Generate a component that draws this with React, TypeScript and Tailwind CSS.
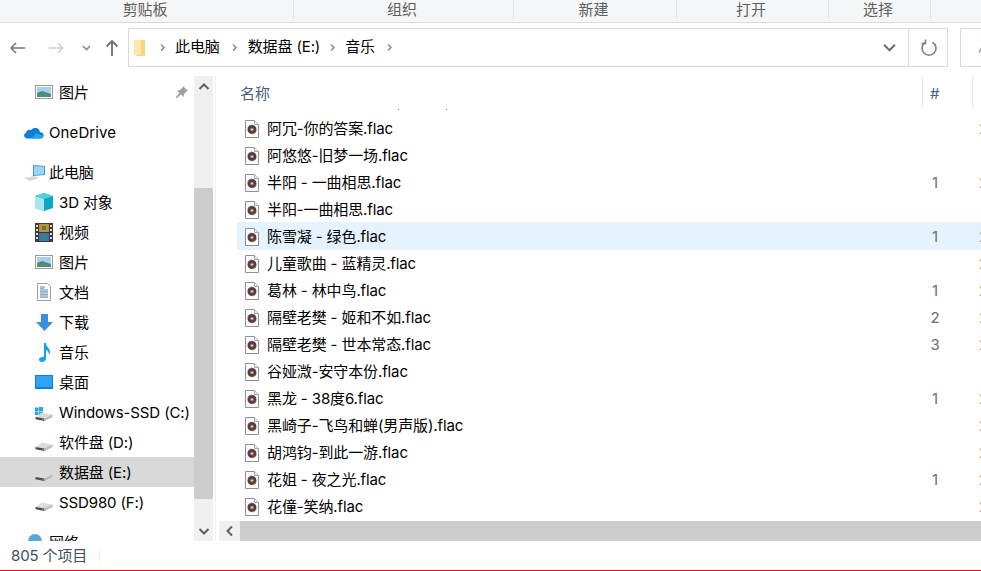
import React from "react";

const FONT = "[font-family:'Inter','Noto_Sans_CJK_SC',sans-serif] tracking-[-0.12px]";

function MusicFile() {
  return (
    <svg width="14" height="18" viewBox="0 0 14 18" className="shrink-0">
      <path d="M.5.5h9l4 4v13H.5z" fill="#fff" stroke="#8f8f8f" />
      <path d="M9.500.5v4h4" fill="#eee" stroke="#a5a5a5" />
      <circle cx="7" cy="9.500" r="4.500" fill="#4a4048" />
      <path d="M3 7.500A4.500 4.500 0 0 1 7 5" stroke="#a040a8" fill="none" />
      <path d="M11 11.500A4.500 4.500 0 0 1 7 14" stroke="#d07838" fill="none" />
      <circle cx="7" cy="9.500" r="1.800" fill="#c87a58" />
      <circle cx="7" cy="9.500" r=".8" fill="#f2e6e0" />
    </svg>
  );
}

function Drive({ win }: { win?: boolean }) {
  return (
    <svg width="18" height="18" viewBox="0 0 18 18">
      {win && (
        <g fill="#22a7e8">
          <rect x="0" y="4.500" width="3.500" height="3.500" />
          <rect x="4" y="4" width="4" height="4" />
          <rect x="0" y="8.500" width="3.500" height="3.500" />
          <rect x="4" y="8.500" width="4" height="4" />
        </g>
      )}
      <path d="M.5 14L7 9.500l10.500 2L9.500 15.500z" fill="#dcdcdc" />
      <path d="M.5 14l9 1.500V18L.5 16.300z" fill="#4a4a4a" />
      <path d="M9.500 15.500l8-4v2.500L9.500 18z" fill="#b8b8b8" />
      <rect x="7" y="15.800" width="1.500" height="1" fill="#4fbf5f" />
    </svg>
  );
}

function PictureIcon() {
  return (
    <svg width="18" height="14" viewBox="0 0 18 14">
      <rect x=".5" y=".5" width="17" height="13" fill="#fff" stroke="#9a9a9a" />
      <rect x="2" y="2" width="14" height="10" fill="#a9d0ee" />
      <path d="M2 8l5-2 9 3v3H2z" fill="#4f8a7c" />
    </svg>
  );
}

const navIcons: Record<string, React.ReactNode> = {
  cube: (
    <svg width="18" height="18" viewBox="0 0 18 18">
      <path d="M9 0l9 3v12l-9 3-9-3V3z" fill="#0fa5c4" />
      <path d="M0 3l9 3v12l-9-3z" fill="#a3e8ec" />
      <path d="M9 0l9 3-9 3-9-3z" fill="#57cfdf" />
    </svg>
  ),
  video: (
    <svg width="18" height="19" viewBox="0 0 18 19">
      <rect width="18" height="19" fill="#3a3a3a" />
      <rect x="4" y="1" width="10" height="8" fill="#c98a3a" />
      <rect x="4" y="10" width="10" height="8" fill="#3a70c8" />
      <path d="M7 3h4v4H7zM7 12h4v4H7z" fill="#3f8f3f" />
      <g fill="#ddd">
        <rect x="1" y="2" width="2" height="2" />
        <rect x="1" y="6" width="2" height="2" />
        <rect x="1" y="10" width="2" height="2" />
        <rect x="1" y="14" width="2" height="2" />
        <rect x="15" y="2" width="2" height="2" />
        <rect x="15" y="6" width="2" height="2" />
        <rect x="15" y="10" width="2" height="2" />
        <rect x="15" y="14" width="2" height="2" />
      </g>
    </svg>
  ),
  picture: <PictureIcon />,
  doc: (
    <svg width="16" height="18" viewBox="0 0 16 18">
      <path d="M1.500.5h10l3 3v14h-13z" fill="#fff" stroke="#a0a0a0" />
      <path d="M4 4h5M4 7h8M4 10h8M4 13h8" stroke="#4a90c8" />
      <path d="M4 5.500h4M4 8.500h8M4 11.500h8M4 14.500h8" stroke="#aaa" />
    </svg>
  ),
  down: (
    <svg width="17" height="17" viewBox="0 0 17 17">
      <path d="M5 0h7v8h5l-8.500 9L0 8h5z" fill="#3b8fe0" />
    </svg>
  ),
  music: (
    <svg width="13" height="19" viewBox="0 0 13 19">
      <path d="M6 0h2c0 4 4 5 4 9 0 1-.3 2-1 3 0-3-1.500-4.500-3-5v8.500c0 2-1.700 3.500-4 3.500-1.800 0-3-1-3-2.500C1 15 3 13.500 6 13.700z" fill="#12a3ef" />
    </svg>
  ),
  desktop: (
    <svg width="18" height="14" viewBox="0 0 18 14">
      <rect width="18" height="14" fill="#0c7fd8" />
      <rect x="1" y="1" width="16" height="11" fill="#2ea2f3" />
    </svg>
  ),
  win: <Drive win />,
  drive: <Drive />,
};

type NavItem = { icon: string; label: string; selected?: boolean };

const libraryItems: NavItem[] = [
  { icon: "cube", label: "3D 对象" },
  { icon: "video", label: "视频" },
  { icon: "picture", label: "图片" },
  { icon: "doc", label: "文档" },
  { icon: "down", label: "下载" },
  { icon: "music", label: "音乐" },
  { icon: "desktop", label: "桌面" },
  { icon: "win", label: "Windows-SSD (C:)" },
  { icon: "drive", label: "软件盘 (D:)" },
  { icon: "drive", label: "数据盘 (E:)", selected: true },
  { icon: "drive", label: "SSD980 (F:)" },
];

const files: { name: string; track?: string; selected?: boolean; mark?: boolean }[] = [
  { name: "阿冗-你的答案.flac", mark: true },
  { name: "阿悠悠-旧梦一场.flac" },
  { name: "半阳 - 一曲相思.flac", track: "1", mark: true },
  { name: "半阳-一曲相思.flac" },
  { name: "陈雪凝 - 绿色.flac", track: "1", selected: true, mark: true },
  { name: "儿童歌曲 - 蓝精灵.flac", mark: true },
  { name: "葛林 - 林中鸟.flac", track: "1", mark: true },
  { name: "隔壁老樊 - 姬和不如.flac", track: "2", mark: true },
  { name: "隔壁老樊 - 世本常态.flac", track: "3", mark: true },
  { name: "谷娅溦-安守本份.flac" },
  { name: "黑龙 - 38度6.flac", track: "1", mark: true },
  { name: "黑崎子-飞鸟和蝉(男声版).flac", mark: true },
  { name: "胡鸿钧-到此一游.flac", mark: true },
  { name: "花姐 - 夜之光.flac", track: "1", mark: true },
  { name: "花僮-笑纳.flac", mark: true },
];

function Chevron({ d, color = "#606060", size = 12 }: { d: string; color?: string; size?: number }) {
  return (
    <svg width={size} height={size} viewBox="0 0 12 12" fill="none" stroke={color} strokeWidth="2">
      <path d={d} />
    </svg>
  );
}

function NavRow({ item }: { item: NavItem }) {
  return (
    <div className={`flex h-[30px] items-center pl-[35px] ${item.selected ? "bg-[#d9d9d9]" : ""}`}>
      <span className="flex w-[18px] shrink-0 justify-center">{navIcons[item.icon]}</span>
      <span className="ml-[6px] whitespace-nowrap pt-[2px] text-[15px] text-black">{item.label}</span>
    </div>
  );
}

function Ribbon() {
  const tabs = [
    ["w-[294px]", "剪贴板"],
    ["w-[220px]", "组织"],
    ["w-[163px]", "新建"],
    ["w-[152px]", "打开"],
    ["w-[102px]", "选择"],
  ];
  return (
    <div className="flex h-[23px] shrink-0 border-b border-[#dadbdc] bg-[#f5f6f7] pb-[3px]">
      {tabs.map(([w, label]) => (
        <div key={label} className={`${w} flex h-[19px] items-center justify-center border-r border-[#e1e3e6] pr-[3px] text-[15px] leading-none text-[#5f5f5f]`}>
          {label}
        </div>
      ))}
    </div>
  );
}

function AddressRow() {
  return (
    <div className="flex h-[53px] shrink-0 items-start pt-[5px]">
      <div className="flex h-[39px] w-[128px] shrink-0 items-center text-[#808080]">
        <svg width="128" height="24" viewBox="0 0 128 24" fill="none">
          <path d="M11 12h14M11 12l5-5M11 12l5 5" stroke="#757575" strokeWidth="1.600" />
          <path d="M49 12h14M63 12l-5-5M63 12l-5 5" stroke="#d0d0d0" strokeWidth="1.600" />
          <path d="M83 10l3.500 3.500L90 10" stroke="#8a8a8a" strokeWidth="1.600" />
          <path d="M112 20V5M106.500 10.500L112 5l5.500 5.500" stroke="#6f6f6f" strokeWidth="1.800" />
        </svg>
      </div>
      <div className="flex h-[39px] w-[820px] shrink-0 items-center border border-[#d9d9d9]">
        <svg width="12" height="18" viewBox="0 0 12 18" className="ml-[5px] shrink-0">
          <path d="M0 1h11v16H3L0 15z" fill="#f6d77a" />
          <path d="M0 1h7v15H2L0 14z" fill="#fbe9ac" />
        </svg>
        <span className="ml-[12px]"><Chevron d="M4 2l4 4-4 4" color="#8a8a8a" size={9} /></span>
        <span className="ml-[8px] text-[15px] text-black">此电脑</span>
        <span className="ml-[10px]"><Chevron d="M4 2l4 4-4 4" color="#8a8a8a" size={9} /></span>
        <span className="ml-[9px] text-[15px] text-black">数据盘 (E:)</span>
        <span className="ml-[8px]"><Chevron d="M4 2l4 4-4 4" color="#8a8a8a" size={9} /></span>
        <span className="ml-[8px] text-[15px] text-black">音乐</span>
        <span className="ml-[10px]"><Chevron d="M4 2l4 4-4 4" color="#8a8a8a" size={9} /></span>
        <span className="flex-1" />
        <span className="mr-[12px]"><Chevron d="M1 3.500l5 5 5-5" color="#707070" size={13} /></span>
        <div className="flex h-full w-[39px] shrink-0 items-center justify-center border-l border-[#d9d9d9]">
          <svg width="18" height="18" viewBox="0 0 18 18" fill="none" stroke="#808080" strokeWidth="1.600" className="ml-[2px]">
            <path d="M5.500 3.200A7 7 0 1 0 12.500 3.200" />
            <path d="M5.500 0.500v4h-4" />
          </svg>
        </div>
      </div>
      <div className="ml-[12px] h-[39px] w-[40px] shrink-0 border border-[#d9d9d9]">
        <span className="ml-[16px] block pt-[8px] text-[14px] text-[#777]">∧</span>
      </div>
    </div>
  );
}

function SideScrollbar() {
  return (
    <div className="flex h-full w-[19px] shrink-0 flex-col bg-[#f0f0f0]">
      <div className="flex h-[21px] shrink-0 items-center justify-center">
        <Chevron d="M1.500 8l4.500-4.500L10.500 8" />
      </div>
      <div className="h-[91px] shrink-0" />
      <div className="h-[311px] shrink-0 bg-[#cdcdcd]" />
      <div className="flex-1" />
      <div className="flex h-[21px] shrink-0 items-center justify-center">
        <Chevron d="M1.500 4l4.500 4.500L10.500 4" />
      </div>
    </div>
  );
}

function Sidebar() {
  return (
    <div className="flex h-full w-[216px] shrink-0 border-r border-[#f0f0f0]">
      <div className="w-[194px] shrink-0 overflow-hidden pt-px">
        <div className="flex h-[30px] items-center pl-[35px]">
          <span className="flex w-[18px] justify-center"><PictureIcon /></span>
          <span className="ml-[6px] flex-1 pt-[2px] text-[15px] text-black">图片</span>
          <svg width="14" height="14" viewBox="0 0 14 14" className="mr-[5px]" fill="#9aa0a6">
            <path d="M8 1l5 5-1.500.5-2.500 2.500-.5 3-2.500-2.500L2 13l-1 0 0-1 3.500-4L2 5.500l3-.5L7.500 2.500z" />
          </svg>
        </div>
        <div className="mt-[10px] flex h-[30px] items-center pl-[24px]">
          <svg width="20" height="14" viewBox="0 0 20 14">
            <path d="M3 13.500a3 3 0 0 1-1-5.800A4 4 0 0 1 7 5a5 5 0 0 1 9 2.300 3 3 0 0 1 1 6.200z" fill="#0f7fd6" />
            <path d="M7 13.500l5-5 7 2a3 3 0 0 1-2 3z" fill="#2aa3ee" />
          </svg>
          <span className="ml-[5px] pt-[2px] text-[15px] tracking-[0.1px] text-black">OneDrive</span>
        </div>
        <div className="mt-[10px] flex h-[30px] items-center pl-[24px]">
          <svg width="21" height="18" viewBox="0 0 21 18">
            <path d="M9 2l12 1v9l-12 1z" fill="#3d97d8" />
            <path d="M10 3l10 .8v7.400l-10 .9z" fill="#9fd4f5" />
            <path d="M0 15l10-2 5 2-9 3z" fill="#d6d6d6" />
          </svg>
          <span className="ml-[4px] pt-[2px] text-[15px] text-black">此电脑</span>
        </div>
        {libraryItems.map((item) => (
          <NavRow key={item.label} item={item} />
        ))}
        <div className="mt-[10px] flex h-[30px] items-center pl-[24px]">
          <svg width="20" height="18" viewBox="0 0 20 18">
            <circle cx="11" cy="8" r="7" fill="#5aa7dc" />
            <rect x="1" y="11" width="9" height="6" fill="#bbb" />
          </svg>
          <span className="ml-[5px] pt-[2px] text-[15px] text-black">网络</span>
        </div>
      </div>
      <SideScrollbar />
    </div>
  );
}

function FileRow({ file }: { file: (typeof files)[number] }) {
  return (
    <div className={`flex shrink-0 items-center ${file.selected ? "-mt-px h-[28px] bg-[#e5f3ff] pt-px" : "h-[27px]"}`}>
      <span className="ml-[8px] flex w-[14px] justify-center"><MusicFile /></span>
      <span className="ml-[8px] w-[655px] shrink-0 whitespace-nowrap pt-[2px] text-[15px] text-black">{file.name}</span>
      <span className="w-[26px] shrink-0 pt-[2px] text-center text-[15px] text-[#6d6d6d]">{file.track}</span>
      <span className="ml-[18px] w-[20px] shrink-0 whitespace-nowrap pl-[13px] pt-[2px] text-[15px] text-[#777]">{file.mark ? "2" : ""}</span>
    </div>
  );
}

function FileArea() {
  return (
    <div className="flex min-w-0 flex-1 flex-col pl-[3px]">
      <div className="flex h-[32px] shrink-0 items-center">
        <span className="ml-[21px] w-[682px] shrink-0 pt-[4px] text-[15px] text-[#4c607a]">名称</span>
        <span className="flex h-full w-[50px] shrink-0 items-center border-l border-[#e5e5e5] pl-[7px] pt-[4px] text-[15px] text-[#4c607a]">#</span>
        <span className="h-full w-[20px] shrink-0 border-l border-[#e5e5e5]" />
      </div>
      <div className="min-h-0 flex-1 overflow-hidden pl-[18px]">
        <div className="flex h-[7px] items-start">
          <span className="ml-[161px] mt-px h-px w-px bg-[#666]" />
          <span className="ml-[47px] mt-px h-px w-px bg-[#666]" />
        </div>
        {files.map((f) => (
          <FileRow key={f.name} file={f} />
        ))}
      </div>
      <div className="flex h-[20px] shrink-0">
        <div className="flex w-[21px] shrink-0 items-center justify-center bg-[#f0f0f0]">
          <Chevron d="M8 1.500L3.500 6 8 10.500" />
        </div>
        <div className="flex-1 bg-[#cdcdcd]" />
      </div>
    </div>
  );
}

export default function App() {
  return (
    <div className={`${FONT} flex h-[571px] w-[981px] flex-col overflow-hidden bg-white`}>
      <Ribbon />
      <AddressRow />
      <div className="flex min-h-0 flex-1">
        <Sidebar />
        <FileArea />
      </div>
      <div className="flex h-[30px] shrink-0 items-center border-b border-[#e81123] pl-[11px] text-[15px] text-[#404f60]">
        <span className="pt-[2px]">805 个项目</span>
        <span className="ml-[12px] h-[14px] border-l border-[#f0f0f0]" />
      </div>
    </div>
  );
}
